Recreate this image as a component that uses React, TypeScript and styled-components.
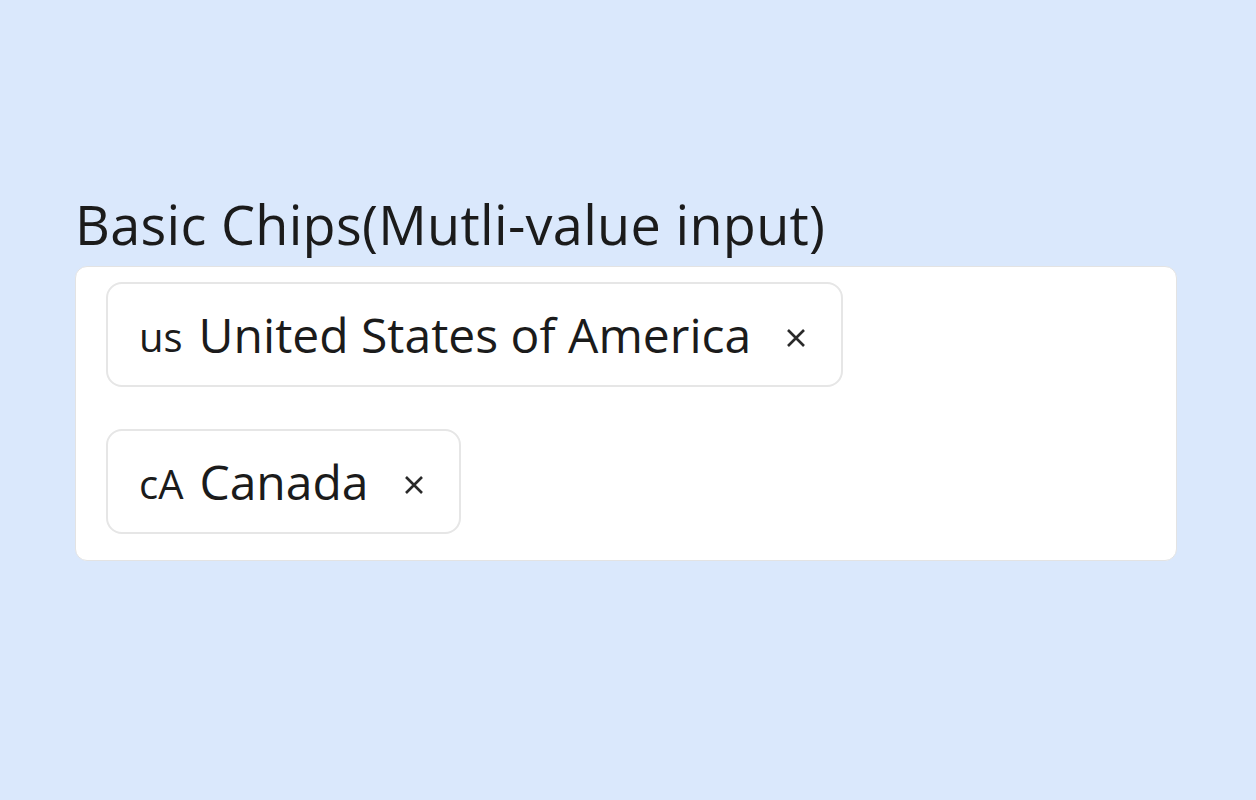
import React from "react";
import styled, { createGlobalStyle } from "styled-components";

const GlobalStyle = createGlobalStyle`
  html, body {
    margin: 0;
    padding: 0;
    background: #dae8fc;
  }
  body {
    font-family: "Open Sans", "Noto Sans", sans-serif;
    color: #1b1b1b;
  }
`;

const countries = [
  { code: "us", name: "United States of America" },
  { code: "cA", name: "Canada" },
];

export default function App() {
  return (
    <>
      <GlobalStyle />
      <Page>
        <Title>Basic Chips(Mutli-value input)</Title>
        <ChipsBox>
          {countries.map((c) => (
            <Chip key={c.code}>
              <Flag>{c.code}</Flag>
              <Label>{c.name}</Label>
              <Close aria-label="remove">
                <svg width="22" height="22" viewBox="0 0 22 22">
                  <path d="M3 3 L19 19 M19 3 L3 19" stroke="#2a2a2a" strokeWidth="2.6" fill="none" />
                </svg>
              </Close>
            </Chip>
          ))}
        </ChipsBox>
      </Page>
    </>
  );
}

const Page = styled.main`
  width: 1256px;
  height: 800px;
  box-sizing: border-box;
  padding: 187px 79px 0 75px;
`;

const Title = styled.h1`
  margin: 0 0 4px;
  font-size: 54px;
  font-weight: 400;
  line-height: 75px;
  letter-spacing: 0.3px;
  white-space: nowrap;
`;

const ChipsBox = styled.div`
  box-sizing: border-box;
  width: 1102px;
  height: 295px;
  background: #fff;
  border: 1px solid #e3e3e3;
  border-radius: 12px;
  padding: 15px 30px;
  display: flex;
  flex-direction: column;
  align-items: flex-start;
  gap: 42px;
`;

const Chip = styled.div`
  box-sizing: border-box;
  height: 105px;
  display: flex;
  align-items: center;
  padding: 0 34px 0 31px;
  border: 2px solid #e6e6e6;
  border-radius: 16px;
  font-size: 48px;
`;

const Flag = styled.span`
  font-size: 40px;
  font-weight: 500;
  margin-right: 16px;
  position: relative;
  top: 2px;
`;

const Label = styled.span``;

const Close = styled.span`
  display: flex;
  margin-left: 34px;
  padding-top: 6px;
`;
